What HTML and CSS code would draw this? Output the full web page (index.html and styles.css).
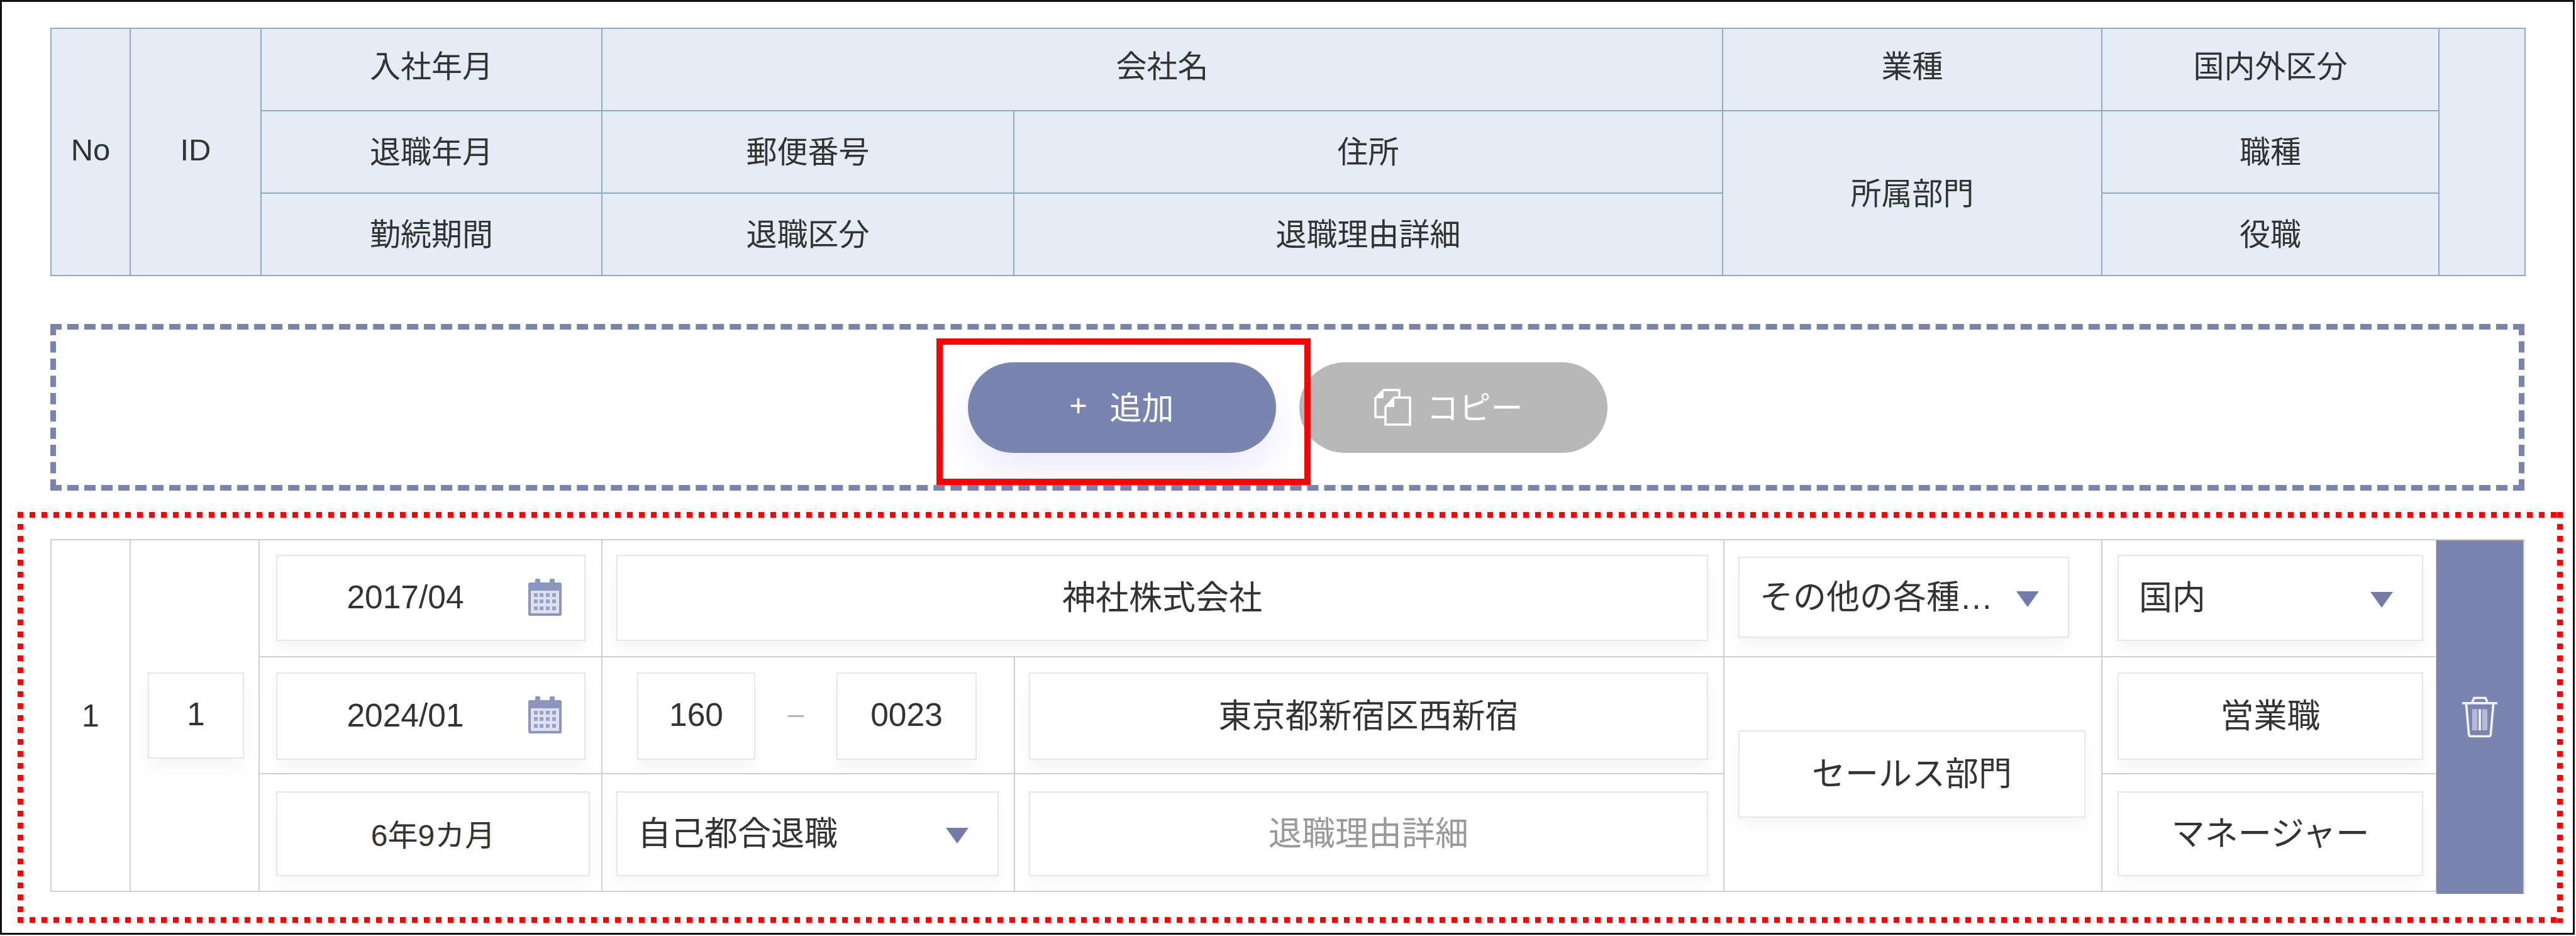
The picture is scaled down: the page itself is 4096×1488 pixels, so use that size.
FILE: index.html
```html
<!DOCTYPE html>
<html lang="ja">
<head>
<meta charset="utf-8">
<title>職歴</title>
<link rel="stylesheet" href="styles.css">
</head>
<body>
<svg class="defs" width="0" height="0" aria-hidden="true">
  <symbol id="cal" viewBox="0 0 53 59">
    <path class="cal-body" d="M3 6H11V3a4 4 0 0 1 8 0V6H34V3a4 4 0 0 1 8 0V6H50a3 3 0 0 1 3 3V56a3 3 0 0 1-3 3H3a3 3 0 0 1-3-3V9a3 3 0 0 1 3-3Z"/>
    <rect class="cal-panel" x="4" y="19" width="45" height="36"/>
    <g class="cal-dots">
      <rect x="9" y="23" width="6" height="6"/><rect x="18" y="23" width="6" height="6"/><rect x="28" y="23" width="6" height="6"/><rect x="38" y="23" width="6" height="6"/>
      <rect x="9" y="33" width="6" height="6"/><rect x="18" y="33" width="6" height="6"/><rect x="28" y="33" width="6" height="6"/><rect x="38" y="33" width="6" height="6"/>
      <rect x="9" y="44" width="6" height="6"/><rect x="18" y="44" width="6" height="6"/><rect x="28" y="44" width="6" height="6"/><rect x="38" y="44" width="6" height="6"/>
    </g>
  </symbol>
</svg>

<main class="frame">
  <table class="grid head">
    <colgroup>
      <col class="h1"><col class="h2"><col class="h3"><col class="h4"><col class="h5"><col class="h6"><col class="h7"><col class="h8">
    </colgroup>
    <tr>
      <th rowspan="3">No</th>
      <th rowspan="3">ID</th>
      <th>入社年月</th>
      <th colspan="2">会社名</th>
      <th>業種</th>
      <th>国内外区分</th>
      <th rowspan="3"></th>
    </tr>
    <tr>
      <th>退職年月</th>
      <th>郵便番号</th>
      <th>住所</th>
      <th rowspan="2">所属部門</th>
      <th>職種</th>
    </tr>
    <tr>
      <th>勤続期間</th>
      <th>退職区分</th>
      <th>退職理由詳細</th>
      <th>役職</th>
    </tr>
  </table>

  <section class="actions">
    <div class="add-wrap">
      <button class="btn btn-add" type="button"><span class="plus">+</span><span>追加</span></button>
      <div class="mark-solid"></div>
    </div>
    <button class="btn btn-copy" type="button">
      <svg class="copy-icon" viewBox="0 0 59 59" aria-hidden="true">
        <path class="ln" d="M18 45H2V15L15 2H40V12"/>
        <path class="fl" d="M2 15L15 2V15Z"/>
        <path class="ln" d="M18 29L32 14H57V57H18Z"/>
        <path class="fl" d="M18 29L32 14V29Z"/>
      </svg>
      <span>コピー</span>
    </button>
  </section>

  <section class="target">
    <table class="grid body">
      <colgroup>
        <col class="b1"><col class="b2"><col class="b3"><col class="b4"><col class="b5"><col class="b6"><col class="b7">
      </colgroup>
      <tr class="r1">
        <td rowspan="3" class="mid center">1</td>
        <td rowspan="3" class="mid"><div class="field w-id center num">1</div></td>
        <td><div class="field w-date date num"><span>2017/04</span><svg class="cal"><use href="#cal"/></svg></div></td>
        <td colspan="2"><div class="field w-company center">神社株式会社</div></td>
        <td><div class="field w-industry select"><span>その他の各種…</span><i class="arrow"></i></div></td>
        <td><div class="field w-right select"><span>国内</span><i class="arrow"></i></div></td>
      </tr>
      <tr class="r2">
        <td><div class="field w-date date num"><span>2024/01</span><svg class="cal"><use href="#cal"/></svg></div></td>
        <td>
          <div class="postal">
            <div class="field w-zip1 center num">160</div>
            <span class="dash">–</span>
            <div class="field w-zip2 center num">0023</div>
          </div>
        </td>
        <td><div class="field w-addr center">東京都新宿区西新宿</div></td>
        <td rowspan="2" class="mid"><div class="field w-dept center">セールス部門</div></td>
        <td><div class="field w-right center">営業職</div></td>
      </tr>
      <tr class="r3">
        <td><div class="field w-term center small">6年9カ月</div></td>
        <td><div class="field w-reason select"><span>自己都合退職</span><i class="arrow"></i></div></td>
        <td><div class="field w-addr center muted">退職理由詳細</div></td>
        <td><div class="field w-right center">マネージャー</div></td>
      </tr>
    </table>
    <button class="delete" type="button" aria-label="削除">
      <svg class="trash" viewBox="0 0 57 64" aria-hidden="true">
        <path class="t-line" d="M2 11H55"/>
        <path class="t-line" d="M17 10L20 3H37L40 10"/>
        <path class="t-line" d="M8 12L12 58Q12 61 15 61H42Q45 61 45 58L49 12"/>
        <rect class="t-bar" x="17" y="20" width="8" height="32"/>
        <rect class="t-bar" x="32" y="20" width="8" height="32"/>
        <path class="t-line" d="M28.5 20V52"/>
      </svg>
    </button>
  </section>
</main>
</body>
</html>
```
FILE: styles.css
```css
* { box-sizing: border-box; }
html, body { margin: 0; padding: 0; background: #fff; }
body {
  font-family: "Liberation Sans", "Noto Sans CJK JP", sans-serif;
  color: #333;
  overflow: hidden;
}
.defs { position: absolute; }

.frame {
  width: 4094px;
  height: 1486px;
  border: 3px solid #111;
  overflow: hidden;
}

/* tables */
.grid {
  border-collapse: collapse;
  table-layout: fixed;
  font-weight: 400;
}
.head {
  width: 3934px;
  height: 395px;
  margin: 41px 0 0 77px;
  font-size: 49px;
}
.head th {
  font-weight: 400;
  background: #e6ecf6;
  border: 2.5px solid #94a8c4;
  padding: 0 0 8px;
  height: 131px;
}
.head tr:first-child th:not([rowspan]) { padding-bottom: 18px; }
.h1 { width: 126px; } .h2 { width: 208px; } .h3 { width: 542px; } .h4 { width: 655px; }
.h5 { width: 1127px; } .h6 { width: 603px; } .h7 { width: 536px; } .h8 { width: 137px; }

/* action strip */
.actions {
  width: 3934px;
  height: 265px;
  margin: 76px 0 0 77px;
  border: 9px dashed #7a84b0;
  display: flex;
  justify-content: center;
  align-items: center;
  gap: 37px;
}
.add-wrap { position: relative; }
.btn {
  display: flex;
  align-items: center;
  justify-content: center;
  width: 490px;
  height: 144px;
  border: 0;
  border-radius: 72px;
  color: #fff;
  font: inherit;
  font-size: 51px;
  padding: 0 0 6px;
}
.btn-add {
  background: #7a84b0;
  box-shadow: 0 30px 60px rgba(125, 95, 225, .13);
  gap: 36px;
}
.plus { font-size: 48px; }
.btn-copy {
  background: #b8b8b8;
  gap: 24px;
  padding-right: 14px;
}
.copy-icon { width: 59px; height: 59px; margin-top: 6px; }
.copy-icon .ln { fill: none; stroke: #fff; stroke-width: 3.5; }
.copy-icon .fl { fill: #fff; }
.mark-solid {
  position: absolute;
  left: -50px;
  top: -38px;
  width: 595px;
  height: 233px;
  border: 10px solid #f00;
  z-index: 2;
  pointer-events: none;
}

/* annotated row */
.target {
  display: flex;
  align-items: flex-start;
  width: 4047px;
  height: 653px;
  margin: 34px 0 0 25px;
  padding: 43px 0 0 52px;
  background:
    linear-gradient(90deg, #f00 50%, transparent 0) left top / 19px 9px repeat-x,
    linear-gradient(90deg, #f00 50%, transparent 0) left bottom / 19px 9px repeat-x,
    linear-gradient(#f00 50%, transparent 0) left top / 9px 19px repeat-y,
    linear-gradient(#f00 50%, transparent 0) right top / 9px 19px repeat-y;
}
.body {
  width: 3793px;
  height: 559px;
  font-size: 50px;
  flex: none;
}
.body td {
  border: 2px solid #cfcfcf;
  padding: 0;
  vertical-align: top;
}
.body td.mid { vertical-align: middle; }
.r1 td { height: 186px; padding-top: 23px; }
.r2 td { height: 186px; padding-top: 24px; }
.r3 td { height: 187px; padding-top: 27px; }
.body .r1 td.mid, .body .r2 td.mid { padding-top: 0; }
.b1 { width: 126px; } .b2 { width: 205px; } .b3 { width: 545px; } .b4 { width: 656px; }
.b5 { width: 1128px; } .b6 { width: 601px; } .b7 { width: 532px; }
.center { text-align: center; }

.field {
  position: relative;
  display: flex;
  align-items: center;
  justify-content: center;
  height: 137px;
  border: 2px solid #e6e6e6;
  background: #fff;
  box-shadow: 0 14px 22px rgba(0, 0, 0, .045);
  font-size: 53px;
  padding-bottom: 9px;
}
.r2 .field { height: 139px; }
.r3 .field { height: 135px; box-shadow: 0 14px 22px rgba(0, 0, 0, .035); }
.field.num { font-size: 51.5px; padding-bottom: 6px; }
.r3 .field.small { font-size: 48px; padding-bottom: 4px; }
.muted { color: #999; }

.date.num { padding-right: 81px; padding-bottom: 3px; }
.cal {
  position: absolute;
  right: 36px;
  top: 36px;
  width: 53px;
  height: 59px;
}
.cal-body { fill: #8b95c0; }
.cal-panel { fill: #dde0ee; }
.cal-dots { fill: #98a1c8; }

.select {
  justify-content: space-between;
  padding: 0 46px 10px 32px;
}
.arrow {
  width: 0;
  height: 0;
  margin-top: 16px;
  border-left: 18px solid transparent;
  border-right: 18px solid transparent;
  border-top: 25px solid #727ca9;
}

/* field widths */
.w-id { width: 153px; margin-left: 27px; }
.w-date { width: 492px; margin-left: 26px; }
.w-term { width: 499px; margin-left: 26px; }
.w-company { width: 1736px; margin-left: 22px; }
.w-industry { width: 526px; margin-left: 22px; margin-top: 3px; height: 129px; }
.w-right { width: 486px; margin-left: 24px; }
.w-addr { width: 1080px; margin-left: 22px; }
.w-dept { width: 552px; margin-left: 22px; }
.w-reason { width: 608px; margin-left: 22px; }
.r2 .w-dept { height: 139px; }

.postal { display: flex; align-items: flex-start; margin-left: 55px; }
.w-zip1 { width: 188px; }
.w-zip2 { width: 223px; }
.dash {
  width: 129px;
  text-align: center;
  line-height: 130px;
  color: #b5b5b5;
  font-size: 46px;
}

/* delete column */
.delete {
  flex: none;
  width: 140px;
  height: 564px;
  margin-left: -1px;
  padding: 0;
  background: #7a84b0;
  border: 0;
  border-top: 2px solid #cfcfcf;
  border-right: 2px solid #cfcfcf;
  display: flex;
  align-items: center;
  justify-content: center;
}
.trash { width: 60px; height: 68px; }
.t-line { fill: none; stroke: #f2f3f8; stroke-width: 3.5; }
.t-bar { fill: #fff; opacity: .45; }
```
